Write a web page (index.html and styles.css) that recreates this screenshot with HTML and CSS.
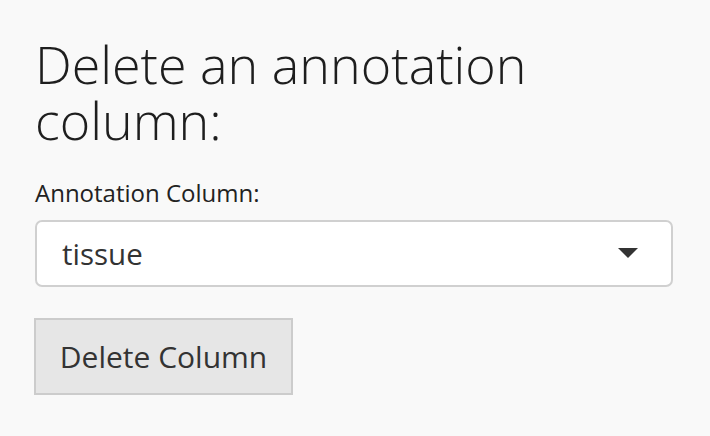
FILE: index.html
```html
<!DOCTYPE html>
<html>
<head>
<meta charset="utf-8">
<link rel="stylesheet" href="styles.css">
</head>
<body>
<div class="panel">
  <h2 class="title">Delete an annotation column:</h2>
  <div class="field">
    <label class="label">Annotation Column:</label>
    <div class="select">
      <span class="select-value">tissue</span>
      <svg class="caret" width="20" height="10" viewBox="0 0 20 10"><polygon points="0,0 20,0 10,10" fill="#333"/></svg>
    </div>
  </div>
  <button class="btn">Delete Column</button>
</div>
</body>
</html>
```
FILE: styles.css
```css
html, body {
  margin: 0;
  padding: 0;
  background: #f9f9f9;
}
body {
  font-family: "Open Sans", "Liberation Sans", sans-serif;
  color: #222;
}
.panel {
  padding: 36px 37px 0 35px;
  display: flex;
  flex-direction: column;
  align-items: flex-start;
}
.title {
  margin: 0;
  font-weight: 300;
  font-size: 52px;
  line-height: 56px;
  color: #1e1e1e;
  width: 560px;
}
.field {
  margin-top: 30px;
  align-self: stretch;
  display: flex;
  flex-direction: column;
}
.label {
  font-size: 24px;
  line-height: 30px;
  color: #222;
}
.select {
  margin-top: 12px;
  height: 63px;
  border: 2px solid #d0d0d0;
  border-radius: 7px;
  background: #fff;
  display: flex;
  align-items: center;
  justify-content: space-between;
  padding: 0 33px 0 25px;
}
.select-value {
  font-size: 29.5px;
  color: #333;
}
.caret {
  display: block;
  margin-top: -2px;
}
.btn {
  margin-top: 31px;
  margin-left: -1px;
  width: 259px;
  height: 77px;
  background: #e6e6e6;
  border: 2px solid #ccc;
  border-radius: 0;
  font-family: "Open Sans", "Liberation Sans", sans-serif;
  font-size: 30px;
  color: #333;
  padding: 0;
}
```
